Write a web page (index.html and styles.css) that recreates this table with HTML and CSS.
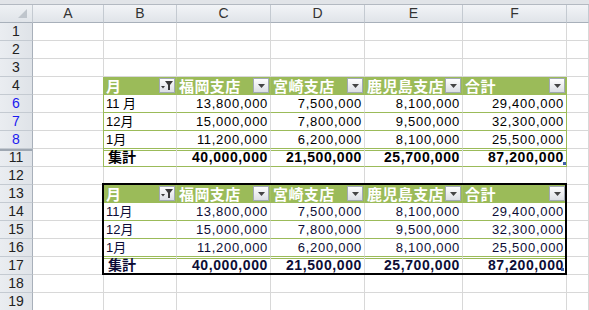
FILE: index.html
```html
<!DOCTYPE html>
<html lang="ja">
<head>
<meta charset="utf-8">
<link rel="stylesheet" href="styles.css">
</head>
<body>
<div class="band"></div>
<div class="sheet">
  <div class="corner"><span class="tri-corner"></span></div>
  <div class="ch">A</div><div class="ch">B</div><div class="ch">C</div><div class="ch">D</div><div class="ch">E</div><div class="ch">F</div><div class="ch"></div>

  <div class="rh">1</div><div class="c"></div><div class="c"></div><div class="c"></div><div class="c"></div><div class="c"></div><div class="c"></div><div class="c"></div>
  <div class="rh">2</div><div class="c"></div><div class="c"></div><div class="c"></div><div class="c"></div><div class="c"></div><div class="c"></div><div class="c"></div>
  <div class="rh">3</div><div class="c"></div><div class="c"></div><div class="c"></div><div class="c"></div><div class="c"></div><div class="c"></div><div class="c"></div>

  <div class="rh">4</div><div class="c"></div>
  <div class="tbl t1">
    <div class="th"><span class="tt">月</span><span class="btn"><svg width="14" height="13" viewBox="0 0 14 13"><path d="M5 2h8l-3 4v5h-2v-5z" fill="#3a3a3a"/><path d="M1 7h4l-2 2.5z" fill="#3a3a3a"/></svg></span></div>
    <div class="th"><span class="tt">福岡支店</span><span class="btn"><svg width="7" height="4" viewBox="0 0 7 4"><path d="M0 0h7L3.5 4z" fill="#444"/></svg></span></div>
    <div class="th"><span class="tt">宮崎支店</span><span class="btn"><svg width="7" height="4" viewBox="0 0 7 4"><path d="M0 0h7L3.5 4z" fill="#444"/></svg></span></div>
    <div class="th"><span class="tt">鹿児島支店</span><span class="btn"><svg width="7" height="4" viewBox="0 0 7 4"><path d="M0 0h7L3.5 4z" fill="#444"/></svg></span></div>
    <div class="th last"><span class="tt">合計</span><span class="btn"><svg width="7" height="4" viewBox="0 0 7 4"><path d="M0 0h7L3.5 4z" fill="#444"/></svg></span></div>

    <div class="td">11 月</div><div class="td num">13,800,000</div><div class="td num">7,500,000</div><div class="td num">8,100,000</div><div class="td num last">29,400,000</div>
    <div class="td">12月</div><div class="td num">15,000,000</div><div class="td num">7,800,000</div><div class="td num">9,500,000</div><div class="td num last">32,300,000</div>
    <div class="td">1月</div><div class="td num">11,200,000</div><div class="td num">6,200,000</div><div class="td num">8,100,000</div><div class="td num last">25,500,000</div>
    <div class="td tot lbl">集計</div><div class="td num tot">40,000,000</div><div class="td num tot">21,500,000</div><div class="td num tot">25,700,000</div><div class="td num tot last hdl">87,200,000</div>
  </div>
  <div class="c"></div>

  <div class="rh f">6</div><div class="c"></div><div class="c"></div>
  <div class="rh f">7</div><div class="c"></div><div class="c"></div>
  <div class="rh f">8</div><div class="c"></div><div class="c"></div>
  <div class="rh hid">11</div><div class="c"></div><div class="c"></div>

  <div class="rh">12</div><div class="c"></div><div class="c"></div><div class="c"></div><div class="c"></div><div class="c"></div><div class="c"></div><div class="c"></div>

  <div class="rh">13</div><div class="c"></div>
  <div class="tbl t2">
    <div class="th"><span class="tt">月</span><span class="btn"><svg width="14" height="13" viewBox="0 0 14 13"><path d="M5 2h8l-3 4v5h-2v-5z" fill="#3a3a3a"/><path d="M1 7h4l-2 2.5z" fill="#3a3a3a"/></svg></span></div>
    <div class="th"><span class="tt">福岡支店</span><span class="btn"><svg width="7" height="4" viewBox="0 0 7 4"><path d="M0 0h7L3.5 4z" fill="#444"/></svg></span></div>
    <div class="th"><span class="tt">宮崎支店</span><span class="btn"><svg width="7" height="4" viewBox="0 0 7 4"><path d="M0 0h7L3.5 4z" fill="#444"/></svg></span></div>
    <div class="th"><span class="tt">鹿児島支店</span><span class="btn"><svg width="7" height="4" viewBox="0 0 7 4"><path d="M0 0h7L3.5 4z" fill="#444"/></svg></span></div>
    <div class="th last"><span class="tt">合計</span><span class="btn"><svg width="7" height="4" viewBox="0 0 7 4"><path d="M0 0h7L3.5 4z" fill="#444"/></svg></span></div>

    <div class="td">11月</div><div class="td num">13,800,000</div><div class="td num">7,500,000</div><div class="td num">8,100,000</div><div class="td num last">29,400,000</div>
    <div class="td">12月</div><div class="td num">15,000,000</div><div class="td num">7,800,000</div><div class="td num">9,500,000</div><div class="td num last">32,300,000</div>
    <div class="td">1月</div><div class="td num">11,200,000</div><div class="td num">6,200,000</div><div class="td num">8,100,000</div><div class="td num last">25,500,000</div>
    <div class="td tot lbl">集計</div><div class="td num tot">40,000,000</div><div class="td num tot">21,500,000</div><div class="td num tot">25,700,000</div><div class="td num tot last hdl">87,200,000</div>
  </div>
  <div class="c"></div>

  <div class="rh">14</div><div class="c"></div><div class="c"></div>
  <div class="rh">15</div><div class="c"></div><div class="c"></div>
  <div class="rh">16</div><div class="c"></div><div class="c"></div>
  <div class="rh">17</div><div class="c"></div><div class="c"></div>

  <div class="rh">18</div><div class="c"></div><div class="c"></div><div class="c"></div><div class="c"></div><div class="c"></div><div class="c"></div><div class="c"></div>
  <div class="rh">19</div><div class="c"></div><div class="c"></div><div class="c"></div><div class="c"></div><div class="c"></div><div class="c"></div><div class="c"></div>
</div>
</body>
</html>
```

FILE: styles.css
```css
* { box-sizing: border-box; }

html, body {
  margin: 0;
  padding: 0;
  background: #fff;
  overflow: hidden;
}

body {
  width: 589px;
  height: 310px;
  font-family: "Liberation Sans", "Noto Sans CJK JP", sans-serif;
  color: #000;
}

.band {
  height: 5px;
  background: #e1e4e8;
  border-bottom: 1px solid #b3b9c1;
}

.sheet {
  display: grid;
  grid-template-columns: 33px 71px 73px 94px 94px 98px 104px 1fr;
  grid-auto-rows: 18px;
}

.corner {
  display: flex;
  justify-content: flex-end;
  align-items: flex-end;
  padding: 0 5px 4px 0;
  background: linear-gradient(#eef1f4, #e0e4e9);
  border-right: 1px solid #c4cad1;
  border-bottom: 1px solid #a8b0ba;
}

.tri-corner {
  width: 9px;
  height: 9px;
  background: #bfc5cc;
  clip-path: polygon(100% 0, 100% 100%, 0 100%);
}

.ch {
  background: linear-gradient(#f2f4f7, #e0e4e9);
  border-right: 1px solid #c4cad1;
  border-bottom: 1px solid #a8b0ba;
  text-align: center;
  font-size: 14px;
  line-height: 17px;
  color: #333;
}

.rh {
  background: linear-gradient(90deg, #eaedf1, #dfe3e8);
  border-right: 1px solid #a8b0ba;
  border-bottom: 1px solid #c4cad1;
  text-align: center;
  font-size: 14px;
  line-height: 17px;
  color: #222;
}

.rh.f { color: #1a1af0; }

.rh.hid {
  background:
    linear-gradient(#9ea7b2, #9ea7b2) 0 0 / 100% 2px no-repeat,
    linear-gradient(90deg, #eaedf1, #dfe3e8);
}

.c {
  border-right: 1px solid #d8d8d8;
  border-bottom: 1px solid #d8d8d8;
}

.tbl {
  grid-column: 3 / 8;
  display: grid;
  grid-template-columns: 73px 94px 94px 98px 104px;
  grid-template-rows: repeat(5, 18px);
  margin-left: -1px;
  border-left: 1px solid #9bbb59;
  position: relative;
}

.t1 { grid-row: 5 / span 5; }
.t2 { grid-row: 11 / span 5; color: #0d0d36; }

.t2::after {
  content: "";
  position: absolute;
  left: -2px;
  top: -2px;
  right: 0;
  bottom: 0;
  border: 2px solid #000;
  pointer-events: none;
}

.th {
  display: flex;
  align-items: center;
  padding-left: 2px;
  background: #9bbb59;
  border-right: 1px solid #a3c062;
  border-bottom: 1px solid #9bbb59;
  color: #fff;
  font-family: "Noto Sans CJK JP", sans-serif;
  font-weight: 700;
  font-size: 15px;
  min-width: 0;
}

.th.last { border-right-color: #9bbb59; }

.tt {
  flex: 1;
  white-space: nowrap;
  line-height: 17px;
  letter-spacing: 0.4px;
}

.btn {
  flex: 0 0 16px;
  height: 15px;
  margin-right: 1px;
  border: 1px solid #a1a9b4;
  background: linear-gradient(#fefefe, #dcdfe4);
  display: flex;
  align-items: center;
  justify-content: center;
}

.btn svg { display: block; }

.td {
  border-right: 1px solid #dcdcdc;
  border-bottom: 1px solid #9bbb59;
  font-size: 13px;
  line-height: 17px;
  padding: 0 2px 0 2px;
  white-space: nowrap;
  position: relative;
}

.td.last { border-right-color: #9bbb59; }

.num {
  text-align: right;
  letter-spacing: 0.7px;
  padding-right: 2px;
}

.tot {
  font-weight: 700;
  font-size: 14px;
  letter-spacing: 0.6px;
  background: linear-gradient(#9bbb59, #9bbb59) 0 1px / 100% 1px no-repeat;
}

.lbl {
  padding-left: 4px;
  letter-spacing: 0;
}

.t1 .hdl::after {
  content: "";
  position: absolute;
  right: 0;
  bottom: 1px;
  width: 3px;
  height: 3px;
  background: #3d5fa9;
}

.t2 .hdl::after {
  content: "";
  position: absolute;
  right: 2px;
  bottom: 3px;
  width: 3px;
  height: 3px;
  background: #3d5fa9;
}
```
